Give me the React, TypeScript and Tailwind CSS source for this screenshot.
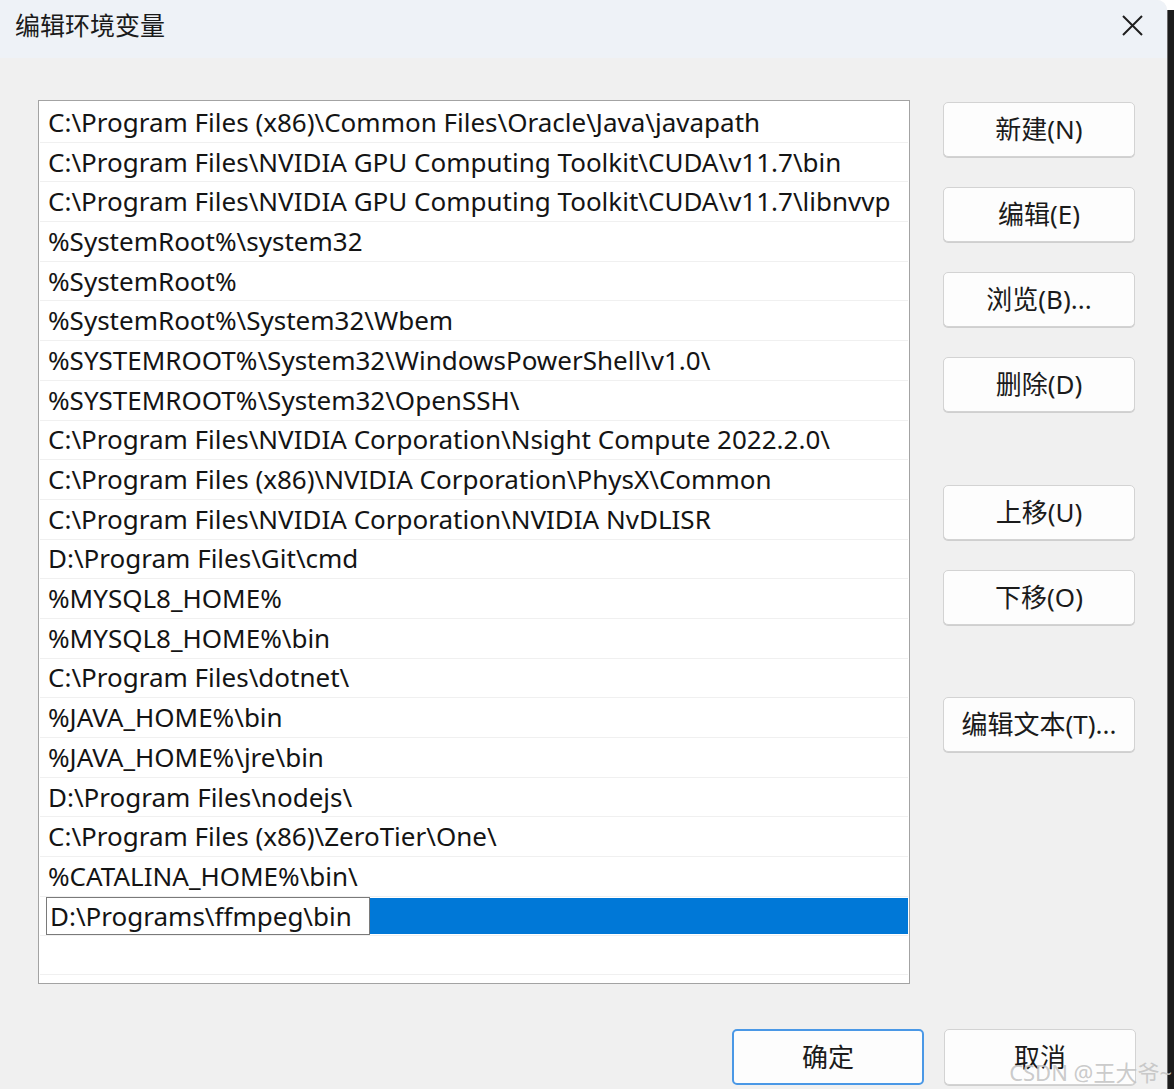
import React from "react";

const rows = [
  "C:\\Program Files (x86)\\Common Files\\Oracle\\Java\\javapath",
  "C:\\Program Files\\NVIDIA GPU Computing Toolkit\\CUDA\\v11.7\\bin",
  "C:\\Program Files\\NVIDIA GPU Computing Toolkit\\CUDA\\v11.7\\libnvvp",
  "%SystemRoot%\\system32",
  "%SystemRoot%",
  "%SystemRoot%\\System32\\Wbem",
  "%SYSTEMROOT%\\System32\\WindowsPowerShell\\v1.0\\",
  "%SYSTEMROOT%\\System32\\OpenSSH\\",
  "C:\\Program Files\\NVIDIA Corporation\\Nsight Compute 2022.2.0\\",
  "C:\\Program Files (x86)\\NVIDIA Corporation\\PhysX\\Common",
  "C:\\Program Files\\NVIDIA Corporation\\NVIDIA NvDLISR",
  "D:\\Program Files\\Git\\cmd",
  "%MYSQL8_HOME%",
  "%MYSQL8_HOME%\\bin",
  "C:\\Program Files\\dotnet\\",
  "%JAVA_HOME%\\bin",
  "%JAVA_HOME%\\jre\\bin",
  "D:\\Program Files\\nodejs\\",
  "C:\\Program Files (x86)\\ZeroTier\\One\\",
  "%CATALINA_HOME%\\bin\\",
];

const font = {
  fontFamily: '"Noto Sans", "Noto Sans CJK SC", sans-serif',
};

function Btn({ label, className = "" }: { label: string; className?: string }) {
  return (
    <div
      className={
        "w-[192px] h-[55px] rounded-[5px] border border-[#d3d3d3] bg-[#fdfdfd] flex items-center justify-center text-[26px] text-[#1b1b1b] shadow-[0_1px_0_#cfcfcf] " +
        className
      }
    >
      {label}
    </div>
  );
}

export default function App() {
  return (
    <div className="relative w-[1174px] h-[1089px] flex bg-white overflow-hidden" style={font}>
      <div className="w-[1167px] h-[1089px] flex flex-col bg-[#f0f0f0] rounded-tr-[10px] overflow-hidden">
        {/* title bar */}
        <div className="h-[58px] bg-[#eef2f7] flex items-center justify-between pl-[15px] pr-[24px] shrink-0">
          <span className="text-[25px] text-[#1a1a1a] leading-none -mt-[8px]">编辑环境变量</span>
          <svg width="21" height="21" viewBox="0 0 21 21" className="-mt-[7px]">
            <path d="M1 1 L20 20 M20 1 L1 20" stroke="#1f1f1f" strokeWidth="2" />
          </svg>
        </div>
        {/* body */}
        <div className="flex pl-[38px] pt-[42px] shrink-0">
          <div className="w-[872px] h-[884px] border border-[#a3a3a3] bg-white pt-[2px] pl-[1px] pr-[1px] overflow-hidden">
            {rows.map((r, i) => (
              <div
                key={i}
                className="h-[39.7px] border-b border-[#f0f0f0] flex items-center pl-[8px] text-[26px] text-[#141414] whitespace-nowrap overflow-hidden"
              >
                {r}
              </div>
            ))}
            <div className="h-[39.7px] border-b border-[#f0f0f0] flex items-stretch pl-[6px]">
              <div className="w-[324px] border border-[#7a7a7a] bg-white flex items-center pl-[3px] text-[26px] text-[#141414] whitespace-nowrap overflow-hidden">
                D:\Programs\ffmpeg\bin
              </div>
              <div className="flex-1 bg-[#0078d7] my-[1px]" />
            </div>
            <div className="h-[39px] border-b border-[#f0f0f0]" />
          </div>
          <div className="ml-[33px] pt-[2px] flex flex-col">
            <Btn label="新建(N)" />
            <Btn label="编辑(E)" className="mt-[30px]" />
            <Btn label="浏览(B)..." className="mt-[30px]" />
            <Btn label="删除(D)" className="mt-[30px]" />
            <Btn label="上移(U)" className="mt-[73px]" />
            <Btn label="下移(O)" className="mt-[30px]" />
            <Btn label="编辑文本(T)..." className="mt-[72px]" />
          </div>
        </div>
        {/* footer */}
        <div className="flex pl-[732px] pt-[45px] gap-[20px] shrink-0">
          <div className="w-[192px] h-[56px] rounded-[5px] border-2 border-[#4a98e6] bg-[#fdfdfd] flex items-center justify-center text-[26px] text-[#1b1b1b]">
            确定
          </div>
          <Btn label="取消" className="h-[56px]" />
        </div>
      </div>
      <div className="w-[7px] h-[1089px] flex flex-col">
        <div className="h-[10px] bg-white" />
        <div className="flex-1 bg-[#1c1c1c] border-l border-[#6b6b6b]" />
      </div>
      <div className="absolute right-[2px] bottom-[6px] text-[22px] text-[#c4c4c4]/90 leading-none whitespace-nowrap">
        CSDN @王大爷~
      </div>
    </div>
  );
}
